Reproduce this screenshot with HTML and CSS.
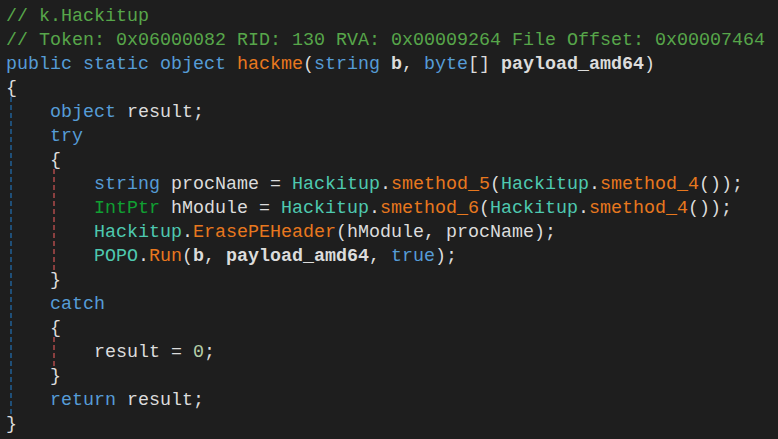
FILE: index.html
```html
<!DOCTYPE html>
<html>
<head>
<meta charset="utf-8">
<link rel="stylesheet" href="styles.css">
</head>
<body>
<div class="code">
<div class="line"><span class="c">// k.Hackitup</span></div>
<div class="line"><span class="c">// Token: 0x06000082 RID: 130 RVA: 0x00009264 File Offset: 0x00007464</span></div>
<div class="line"><span class="k">public static object</span> <span class="m">hackme</span>(<span class="k">string</span> <span class="p">b</span>, <span class="k">byte</span>[] <span class="p">payload_amd64</span>)</div>
<div class="line">{</div>
<div class="block outer">
<div class="line">    <span class="k">object</span> result;</div>
<div class="line">    <span class="k">try</span></div>
<div class="line">    {</div>
<div class="block inner">
<div class="line">        <span class="k">string</span> procName = <span class="t">Hackitup</span>.<span class="m">smethod_5</span>(<span class="t">Hackitup</span>.<span class="m">smethod_4</span>());</div>
<div class="line">        <span class="v">IntPtr</span> hModule = <span class="t">Hackitup</span>.<span class="m">smethod_6</span>(<span class="t">Hackitup</span>.<span class="m">smethod_4</span>());</div>
<div class="line">        <span class="t">Hackitup</span>.<span class="m">ErasePEHeader</span>(hModule, procName);</div>
<div class="line">        <span class="t">POPO</span>.<span class="m">Run</span>(<span class="p">b</span>, <span class="p">payload_amd64</span>, <span class="k">true</span>);</div>
</div>
<div class="line">    }</div>
<div class="line">    <span class="k">catch</span></div>
<div class="line">    {</div>
<div class="block inner">
<div class="line">        result = <span class="n">0</span>;</div>
</div>
<div class="line">    }</div>
<div class="line">    <span class="k">return</span> result;</div>
</div>
<div class="line">}</div>
</div>
</body>
</html>
```
FILE: styles.css
```css
html, body {
  margin: 0;
  padding: 0;
  background: #1e1e1e;
}
.code {
  padding: 5px 0 0 6px;
  font-family: "Liberation Mono", "DejaVu Sans Mono", monospace;
  font-size: 18.33px;
  color: #dcdcdc;
}
.line {
  height: 24px;
  line-height: 24px;
  white-space: pre;
}
.block {
  position: relative;
}
.block::before {
  content: "";
  position: absolute;
  top: -4px;
  bottom: -2px;
  width: 2px;
  background: repeating-linear-gradient(to bottom, var(--guide) 0 5px, transparent 5px 8px);
}
.outer {
  --guide: #1f4f78;
}
.outer::before {
  left: 4px;
}
.inner {
  --guide: #8a3f3f;
}
.inner::before {
  left: 47px;
}
.c { color: #57a64a; }
.k { color: #569cd6; }
.m { color: #e8781e; }
.t { color: #4ec9b0; }
.v { color: #10a032; }
.p { font-weight: bold; color: #dcdcdc; }
.n { color: #b5cea8; }
```
